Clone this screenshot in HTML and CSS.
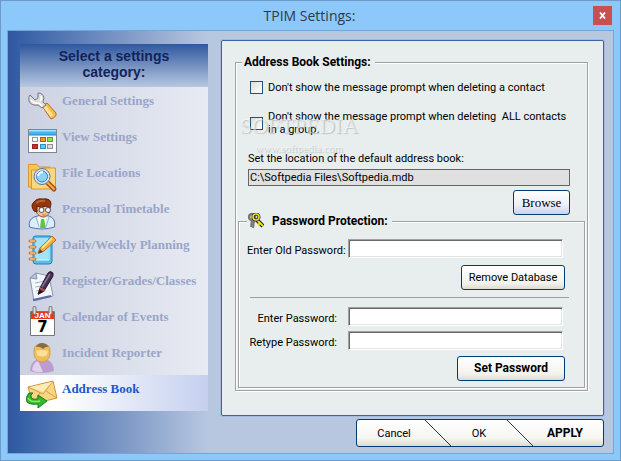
FILE: index.html
```html
<!DOCTYPE html>
<html lang="en">

<head>
    <meta charset="utf-8">
    <title>TPIM Settings:</title>
    <link rel="stylesheet" href="styles.css">
</head>

<body>
    <div class="window">
        <header class="titlebar">
            <h1>TPIM Settings:</h1>
            <button type="button" class="close" aria-label="Close">
                <svg width="7" height="7" viewBox="0 0 7 7"><path d="M1 .5 6 6.5M6 .5 1 6.5" stroke="#fff" stroke-width="1.8"/></svg>
            </button>
        </header>

        <div class="client">
            <!-- Category list -->
            <nav class="sidebar">
                <h2>Select a settings category:</h2>
                <a href="#general">
                    <svg width="30" height="30" viewBox="0 0 30 30">
                        <path d="M14 15 19 12 28 22Q29 26 23 28Z" fill="#f9bd4c" stroke="#c5671c"/>
                        <path d="M17 16 24 25" stroke="#ffe49a" stroke-width="3"/>
                        <path d="M2 4 7 9 10 7 10 2Q15 2 16 7L15 11 18 14 14 17 10 14Q3 15 1 10 0 6 2 4Z" fill="#dcdcdf" stroke="#77777c"/>
                        <path d="M3 9Q6 13 11 12L14 15M13 5Q14 8 12 10" stroke="#fff" stroke-width="1.5" fill="none"/>
                    </svg>
                    <span>General Settings</span>
                </a>
                <a href="#view">
                    <svg width="30" height="30" viewBox="0 0 30 30">
                        <rect x=".5" y="2.500" width="28" height="23" fill="#fdfdfd" stroke="#7c8791"/>
                        <path d="M1 3H28V8H1Z" fill="#46b4ee"/>
                        <path d="M1 3H28V4.500H1Z" fill="#a5e2fc"/>
                        <path d="M1 8H28" stroke="#2384c9"/>
                        <rect x="4.500" y="10.500" width="5" height="4" fill="#fff" stroke="#999"/>
                        <rect x="12.500" y="10.500" width="5" height="4" fill="#f09a23" stroke="#96661f"/>
                        <rect x="19.500" y="10.500" width="5" height="4" fill="#93dc57" stroke="#5a9c35"/>
                        <rect x="4.500" y="17.500" width="5" height="4" fill="#d42d25" stroke="#952522"/>
                        <rect x="12.500" y="17.500" width="5" height="4" fill="#62c7f7" stroke="#368fba"/>
                        <rect x="19.500" y="17.500" width="5" height="4" fill="#e2d8df" stroke="#998d98"/>
                    </svg>
                    <span>View Settings</span>
                </a>
                <a href="#files">
                    <svg width="30" height="30" viewBox="0 0 30 30">
                        <path d="M.5 24V1.500H9L11 4H22V24Z" fill="#f9c657" stroke="#d89531"/>
                        <path d="M3.500 26V7H12L14 5H27.500V26Z" fill="#fcd87d" stroke="#d89531"/>
                        <path d="M19 19 26 26" stroke="#a64d18" stroke-width="5" stroke-linecap="round"/>
                        <path d="M20 20 26 26" stroke="#f9ad43" stroke-width="2" stroke-linecap="round"/>
                        <circle cx="14" cy="13.500" r="7" fill="#8bd4f6" stroke="#dfe5ed" stroke-width="3"/>
                        <circle cx="14" cy="13.500" r="8" fill="none" stroke="#5d6f90"/>
                        <circle cx="14" cy="13.500" r="5.500" fill="none" stroke="#3a79c5"/>
                        <path d="M10 13Q11 9 15 9" stroke="#fff" stroke-width="2" fill="none"/>
                    </svg>
                    <span>File Locations</span>
                </a>
                <a href="#timetable">
                    <svg width="30" height="30" viewBox="0 0 30 30">
                        <path d="M1.500 28Q0 21 6 18L13 16 21 17Q28 19 26.500 28Q14 32 1.500 28Z" fill="#dceefb" stroke="#5575aa"/>
                        <path d="M10 18 14 21 18 18V29H12Z" fill="#fff"/>
                        <path d="M13 20H16L18 29H12Z" fill="#60c43d"/>
                        <path d="M8 18 11 28M21 18 18 28" stroke="#92b4da"/>
                        <path d="M7 8Q7 4 15 5 23 4 22 12 20 18 15 18 8 17 7 8Z" fill="#f8c18b" stroke="#9d6038"/>
                        <path d="M6 12Q2 6 6 3 9-1 15 0 23-1 23 5L22 9 18 7Q13 10 9 7L9 13Z" fill="#923710" stroke="#602006"/>
                        <path d="M8 4Q12 1 17 2" stroke="#c1622a" stroke-width="2" fill="none"/>
                        <circle cx="13.500" cy="11" r="2.500" fill="#f7fbff" stroke="#434b78"/>
                        <circle cx="20" cy="11" r="2.500" fill="#f7fbff" stroke="#434b78"/>
                        <path d="M14 16H18" stroke="#c77252"/>
                    </svg>
                    <span>Personal Timetable</span>
                </a>
                <a href="#planning">
                    <svg width="30" height="30" viewBox="0 0 30 30">
                        <path d="M5 3Q5 1 8 1H22Q24 1 24 4V26Q24 29 21 29H8Q5 29 5 26Z" fill="#59bde9" stroke="#2380ba"/>
                        <path d="M7 3H20V25H7Z" fill="#a4e2fa"/>
                        <path d="M8 25H21V4" stroke="#e5f8ff" fill="none"/>
                        <g fill="none" stroke="#d67a28" stroke-width="3" stroke-linecap="round"><path d="M2 6H7M2 12H7M2 18H7M2 24H7"/></g>
                        <g stroke="#ffe0a0"><path d="M2 6H7M2 12H7M2 18H7M2 24H7"/></g>
                        <path d="M10 18 12 13 24 1 28 5 16 16Z" fill="#f9ad3d" stroke="#ba6a1d"/>
                        <path d="M14 13 24 3" stroke="#ffe08b" stroke-width="2"/>
                        <path d="M10 19 12 14 15 17Z" fill="#66422a"/>
                    </svg>
                    <span>Daily/Weekly Planning</span>
                </a>
                <a href="#register">
                    <svg width="30" height="30" viewBox="0 0 30 30">
                        <path d="M2 7 8 2 21 5 25 25 6 30Z" fill="#f3f6fc" stroke="#8796b2"/>
                        <path d="M2 7 8 2 9 8Z" fill="#b7c4dc" stroke="#8796b2"/>
                        <path d="M7 12 17 10M7 16 14 15M8 20 13 19" stroke="#a6b1ca"/>
                        <path d="M5 29 23 25" stroke="#596c9e" stroke-width="2"/>
                        <path d="M10 23 12 17 20 2Q22-1 25 2L25 5 16 20Z" fill="#44304d" stroke="#251b30"/>
                        <path d="M14 16 22 3" stroke="#8c709c" stroke-width="1.500"/>
                        <path d="M12 17 17 20" stroke="#c6524c" stroke-width="1.500"/>
                        <path d="M10 24 12 19 15 21Z" fill="#1d1822"/>
                    </svg>
                    <span>Register/Grades/Classes</span>
                </a>
                <a href="#events">
                    <svg width="30" height="30" viewBox="0 0 30 30">
                        <path d="M2.500 4.500H26.500V28.500H2.500Z" fill="#fff" stroke="#777"/>
                        <path d="M3 5H26V12H3Z" fill="#e43b20"/>
                        <path d="M6.500 1V6M22.500 1V6" stroke="#777" stroke-width="4" stroke-linecap="round"/>
                        <path d="M6.500 1V6M22.500 1V6" stroke="#ddd" stroke-width="2" stroke-linecap="round"/>
                        <text x="14.500" y="11" class="cal-month">JAN</text>
                        <text x="14.500" y="25" class="cal-day">7</text>
                    </svg>
                    <span>Calendar of Events</span>
                </a>
                <a href="#incident">
                    <svg width="30" height="30" viewBox="0 0 30 30">
                        <path d="M2 28Q2 20 8 17H20Q26 20 26 28Q14 32 2 28Z" fill="#bd9dcd"/>
                        <path d="M4 27Q5 20 10 18L15 29Q8 30 4 27Z" fill="#e2d3ed"/>
                        <path d="M6 7Q6 1 14 1T22 7L22 12Q20 19 14 19T6 12Z" fill="#edbd58" stroke="#c59443" stroke-width=".7"/>
                        <path d="M8 8Q12 6 20 8L19 12Q14 15 9 12Z" fill="#fbdf9b"/>
                        <path d="M8 4Q10 0 14 0T21 4Q18 3 15 6 12 3 8 4Z" fill="#856b49"/>
                    </svg>
                    <span>Incident Reporter</span>
                </a>
                <a href="#address" class="active">
                    <svg width="30" height="30" viewBox="2 -1 30 30">
                        <path d="M2 7 27 1 31 18 7 24Z" fill="#fbd581" stroke="#c99737"/>
                        <path d="M2 7 17 14 27 1M7 23 14 13M31 18 20 11" fill="none" stroke="#d3a047"/>
                        <path d="M4 7 17 12 26 2Z" fill="#ffebb5"/>
                        <path d="M3 13Q-1 17 1 22 4 25 12 24V28L21 21 12 15V19Q6 20 5 17 4 15 7 13Z" fill="#38b929" stroke="#167b19"/>
                        <path d="M2 18Q4 23 14 21" fill="none" stroke="#94e673" stroke-width="1.500"/>
                    </svg>
                    <span>Address Book</span>
                </a>
            </nav>

            <form class="main">
                <div class="panel">
                    <fieldset class="group">
                        <legend>Address Book Settings:</legend>
                        <div class="book">
                            <label class="check">
                                <input type="checkbox">
                                <span>Don't show the message prompt when deleting a contact</span>
                            </label>
                            <label class="check">
                                <input type="checkbox">
                                <span>Don't show the message prompt when deleting&nbsp; ALL contacts<br>in a group.</span>
                            </label>
                            <div class="location">
                                <label for="path">Set the location of the default address book:</label>
                                <input type="text" id="path" value="C:\Softpedia Files\Softpedia.mdb" readonly>
                            </div>
                            <button type="button" class="btn browse">Browse</button>
                            <div class="watermark" aria-hidden="true">
                                <div class="brand">SOFTPEDIA</div>
                                <div class="site">www.softpedia.com</div>
                            </div>
                        </div>

                        <fieldset class="group password">
                            <legend>
                                <svg width="16" height="16" viewBox="0 0 16 16">
                                    <path d="M4 7 3 14M6 8 5 15" stroke="#777" stroke-width="2"/>
                                    <circle cx="4" cy="4" r="3" fill="none" stroke="#777" stroke-width="2.500"/>
                                    <path d="M8 6 15 13" stroke="#111" stroke-width="4"/>
                                    <path d="M8 6 15 13M12 10 10 12" stroke="#efe02c" stroke-width="2"/>
                                    <circle cx="8" cy="4" r="3" fill="none" stroke="#222" stroke-width="3"/>
                                    <circle cx="8" cy="4" r="3" fill="none" stroke="#efe02c" stroke-width="1.500"/>
                                </svg>
                                Password Protection:
                            </legend>
                            <div class="field">
                                <label for="old">Enter Old Password:</label>
                                <input type="password" id="old">
                            </div>
                            <button type="button" class="btn remove">Remove Database</button>
                            <hr>
                            <div class="field new">
                                <label for="new">Enter Password:</label>
                                <input type="password" id="new">
                            </div>
                            <div class="field new">
                                <label for="retype">Retype Password:</label>
                                <input type="password" id="retype">
                            </div>
                            <button type="button" class="btn set">Set Password</button>
                        </fieldset>
                    </fieldset>
                </div>

                <div class="actions">
                    <button type="button" class="cancel">Cancel</button>
                    <svg width="26" height="26" viewBox="0 0 26 26"><path d="M0 0 26 26" stroke="#003c74"/></svg>
                    <button type="button" class="ok">OK</button>
                    <svg width="26" height="26" viewBox="0 0 26 26"><path d="M0 0 26 26" stroke="#003c74"/></svg>
                    <button type="submit" class="apply">APPLY</button>
                </div>
            </form>
        </div>
    </div>
</body>

</html>
```
FILE: styles.css
```css
* {
    box-sizing: border-box;
}

body {
    margin: 0;
    font-family: Roboto, "Liberation Sans", Arial, sans-serif;
    font-size: 11px;
    line-height: 13px;
    color: #000;
}

button,
input {
    font: inherit;
    color: inherit;
    margin: 0;
}

/* Window frame */
.window {
    min-height: 100vh;
    display: flex;
    flex-direction: column;
    padding: 0 6px 6px;
    background: #8dc8fb;
    border: 1px solid #6b9bc6;
}

.titlebar {
    display: grid;
    grid-template-columns: 1fr auto 1fr;
    align-items: center;
    height: 29px;
    padding-right: 2px;
}

.titlebar h1 {
    grid-column: 2;
    margin: 0;
    font-family: "Open Sans", "Segoe UI", sans-serif;
    font-size: 14px;
    font-weight: 400;
    line-height: 20px;
    color: #2b3a48;
}

.close {
    justify-self: end;
    display: flex;
    align-items: center;
    justify-content: center;
    width: 19px;
    height: 19px;
    padding: 0;
    border: 0;
    background: #c75050;
}

.client {
    flex: 1;
    display: grid;
    grid-template-columns: 188px 1fr;
    align-items: start;
    gap: 13px;
    padding: 9px 9px 6px 12px;
    border: 1px solid #75a5d3;
    background: linear-gradient(to right, #2f58a0, #355fa6 12px, #b8c7e0 200px);
}

/* Category list */
.sidebar {
    margin-top: 4px;
    background: linear-gradient(to right, #cbd1e1, #e8ebf3);
}

.sidebar h2 {
    margin: 0;
    height: 43px;
    padding: 4px 30px 0;
    font-family: "Liberation Sans", Arial, sans-serif;
    font-size: 14px;
    line-height: 16px;
    text-align: center;
    color: #12235b;
    background: linear-gradient(#2f58a0, #b8c7e0);
}

.sidebar a {
    display: flex;
    height: 36px;
    padding: 4px 0 0 8px;
    font-family: "Liberation Serif", "Times New Roman", serif;
    font-size: 13px;
    font-weight: 700;
    line-height: 20px;
    color: #9aa5c8;
    text-decoration: none;
}

.sidebar svg {
    flex: none;
    width: 30px;
    margin-right: 4px;
    overflow: visible;
}

.sidebar .active {
    color: #2257c4;
    background: linear-gradient(to right, #fff 20%, #c5d0ef);
}

.cal-month {
    font: bold 8px "Liberation Sans", sans-serif;
    fill: #fff;
    text-anchor: middle;
}

.cal-day {
    font: bold 15px "DejaVu Sans", sans-serif;
    text-anchor: middle;
}

/* Settings panel */
.panel {
    padding: 14px 15px 24px 13px;
    background: #e8eeee;
    border: 1px solid #3a63a6;
    border-radius: 2px;
    box-shadow: 0 0 0 1px #a3b9dd;
}

.group {
    min-width: 0;
    margin: 0;
    padding: 12px 2px 2px;
    border: 1px solid #a0a0a0;
    box-shadow: 1px 1px 0 #fff, inset 1px 1px 0 #fff;
}

legend {
    display: flex;
    align-items: center;
    height: 14px;
    margin-left: 4px;
    padding: 0 4px 0 2px;
    font-size: 12px;
    font-weight: 700;
    background: #e8eeee;
}

.book {
    position: relative;
    display: flex;
    flex-direction: column;
    gap: 16px;
    padding: 0 15px 0 10px;
}

.check {
    display: flex;
    align-items: center;
    gap: 5px;
    padding-left: 2px;
}

.check input {
    flex: none;
    appearance: none;
    width: 13px;
    height: 13px;
    border: 1px solid #1c5180;
    background: linear-gradient(135deg, #dcdcd7, #fff);
}

.location {
    display: grid;
    gap: 4px;
}

.location input {
    width: 100%;
    height: 17px;
    padding: 0 1px;
    border: 1px solid #646464;
    background: #e0e0e0;
}

.btn {
    align-self: flex-end;
    height: 25px;
    padding: 0;
    border: 1px solid #003c74;
    border-radius: 3px;
    background: linear-gradient(#fff, #f2f2ed 75%, #dedbd0);
}

.browse {
    width: 57px;
    margin-top: -12px;
    font-family: "Liberation Serif", "Times New Roman", serif;
    font-size: 13px;
    background: linear-gradient(#fff, #edeff9 60%, #ccd2e8);
}

/* Watermark lies over the check boxes */
.watermark {
    position: absolute;
    left: 0;
    top: 34px;
    width: 122px;
    text-align: center;
    font-family: "Liberation Serif", "Times New Roman", serif;
    color: rgba(255, 255, 255, 0.5);
    text-shadow: 1px 1px 1px rgba(120, 130, 130, 0.4);
    pointer-events: none;
}

.brand {
    font-size: 22px;
    line-height: 22px;
}

.site {
    font-size: 11px;
    line-height: 22px;
}

/* Password box */
.password {
    display: flex;
    flex-direction: column;
    margin-top: -1px;
    padding: 11px 15px 6px 8px;
}

.password legend {
    gap: 8px;
    margin-left: 0;
    padding-left: 1px;
}

.field {
    display: grid;
    grid-template-columns: 101px 1fr;
    align-items: center;
    margin-right: 6px;
}

.field label {
    padding: 3px 5px 0 0;
    text-align: right;
    white-space: nowrap;
}

.field.new label {
    padding-right: 11px;
}

.field input {
    min-width: 0;
    width: 100%;
    height: 19px;
    padding: 0 2px;
    border: 1px solid;
    border-color: #a0a0a0 #fff #fff #a0a0a0;
    background: #fff;
    box-shadow: inset 1px 1px 0 #696969, inset -1px -1px 0 #e3e3e3;
}

.field.new + .field.new {
    margin-top: 5px;
}

.password hr {
    align-self: stretch;
    margin: 7px 0 9px 3px;
    border: 0;
    border-top: 1px solid #9c9f9f;
}

.password .btn {
    margin-right: 4px;
}

.remove {
    width: 104px;
    margin-top: 7px;
}

.set {
    width: 108px;
    margin-top: 6px;
    font-size: 12px;
    font-weight: 700;
}

/* Bottom buttons */
.actions {
    display: flex;
    width: fit-content;
    height: 28px;
    margin: 3px 0 0 auto;
    border: 1px solid #003c74;
    border-radius: 3px;
    background: linear-gradient(#fff, #f5f5f1 70%, #dedbd0);
}

.actions button {
    padding: 0;
    border: 0;
    background: none;
}

.actions svg {
    flex: none;
}

.actions .cancel {
    width: 68px;
    padding-left: 6px;
}

.actions .ok {
    width: 56px;
}

.actions .apply {
    width: 70px;
    padding-right: 6px;
    font-size: 12px;
    font-weight: 700;
}
```
